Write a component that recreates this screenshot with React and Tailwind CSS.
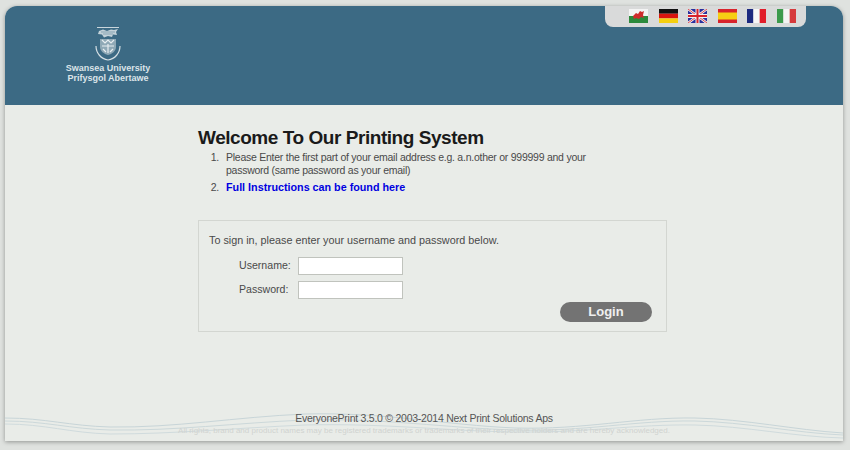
import React from 'react';

function Crest() {
  return (
    <svg width="30" height="36" viewBox="0 0 30 36" fill="none" className="block">
      {/* top bar and dragon */}
      <path d="M4 1.5 H26" stroke="#c9d6dc" strokeWidth="1" />
      <path d="M6 5 L10 3.5 L14 5 L18 3.5 L21 4 L25 3 L23 6 L24 9 L20 8.5 L19 11 L15 10 L11 11.5 L9 8.5 L5 8 Z" fill="#c3d2d9" />
      <path d="M8 6 H22 M10 8 H20" stroke="#6f93a5" strokeWidth="0.7" />
      {/* shield */}
      <path d="M7 13 H23 V21 C23 25 19 28 15 29 C11 28 7 25 7 21 Z" fill="#8fa9b6" />
      <path d="M9 14 L12 17 L15 14 L18 17 L21 14 M9 20 H21 M10 23 L13 26 M20 23 L17 26 M15 18 V27" stroke="#e6edf0" strokeWidth="1.2" />
      {/* scroll under the shield */}
      <path d="M3 20 C3 27 8 33 15 34 C22 33 27 27 27 20" stroke="#d3dee3" strokeWidth="1.2" />
    </svg>
  );
}

function Flag({ children }) {
  return (
    <svg width="19" height="14" viewBox="0 0 19 14" className="block">
      {children}
    </svg>
  );
}

function Flags() {
  return (
    <div className="absolute top-0 right-[37px] w-[201px] h-[21px] bg-[#d9dada] rounded-b-[8px] flex items-start justify-end gap-[10.6px] pt-[3px] pr-[10px]">
      <Flag>
        <rect width="19" height="7" fill="#f4f4f4" />
        <rect y="7" width="19" height="7" fill="#2c8a3c" />
        <path d="M4 7 L7 4 L9 5 L11 2 L13 3 L15 2 L14 6 L15 9 L12 8 L10 10 L7 9 L5 10 Z" fill="#cf2b2b" />
      </Flag>
      <Flag>
        <rect width="19" height="4.7" fill="#111" />
        <rect y="4.7" width="19" height="4.7" fill="#d8150f" />
        <rect y="9.4" width="19" height="4.6" fill="#f5cf10" />
      </Flag>
      <Flag>
        <rect width="19" height="14" fill="#2a2f9c" />
        <path d="M0 0 L19 14 M19 0 L0 14" stroke="#f2f2f2" strokeWidth="2.6" />
        <path d="M0 0 L19 14 M19 0 L0 14" stroke="#d8343c" strokeWidth="0.9" />
        <path d="M9.5 0 V14 M0 7 H19" stroke="#f2f2f2" strokeWidth="4" />
        <path d="M9.5 0 V14 M0 7 H19" stroke="#d8242c" strokeWidth="2" />
      </Flag>
      <Flag>
        <rect width="19" height="14" fill="#d9232b" />
        <rect y="3.5" width="19" height="7" fill="#f6cf14" />
      </Flag>
      <Flag>
        <rect width="6.4" height="14" fill="#1d2a80" />
        <rect x="6.4" width="6.3" height="14" fill="#f7f7f7" />
        <rect x="12.7" width="6.3" height="14" fill="#e11d2a" />
      </Flag>
      <Flag>
        <rect width="6.4" height="14" fill="#3c9a4c" />
        <rect x="6.4" width="6.3" height="14" fill="#f4f4f4" />
        <rect x="12.7" width="6.3" height="14" fill="#d63a3c" />
      </Flag>
    </div>
  );
}

function Waves() {
  return (
    <svg className="absolute left-0 bottom-0 pointer-events-none" width="838" height="30" viewBox="0 0 838 30" fill="none">
      <path d="M0 7 C40 7 65 15 105 16 C170 17 230 6 300 3 C380 1 440 14 510 17 C580 19 630 6 690 7 C740 8 790 19 838 22" stroke="#c8d5d8" strokeWidth="1" />
      <path d="M0 10 C40 10 65 18 105 19 C170 20 230 12 300 9 C380 7 440 17 510 19 C580 21 630 9 690 10 C740 11 790 22 838 24" stroke="#ccd8da" strokeWidth="1" />
      <path d="M0 13 C40 13 65 22 105 23 C170 23 230 17 300 14 C380 12 440 20 510 21 C580 22 630 13 690 14 C740 15 790 26 838 27" stroke="#d0dbdd" strokeWidth="1" />
    </svg>
  );
}

export default function App() {
  return (
    <div className="w-[850px] h-[450px] bg-[#dfe2df] pt-[6px] pl-[5px] overflow-hidden font-['Liberation_Sans',Arial,sans-serif]">
      <div className="relative w-[838px] h-[435px] bg-[#e9ece8] rounded-t-[12px] shadow-[0_1px_4px_rgba(0,0,0,0.35)] flex flex-col overflow-hidden">
        {/* Header */}
        <div className="h-[99px] shrink-0 bg-[#3c6a84] pl-[59px] pt-[20px]">
          <div className="flex flex-col items-center w-[88px]">
            <Crest />
            <div className="mt-[2px] text-[9px] leading-[9.5px] font-bold text-[#dbe4e9] text-center whitespace-nowrap">
              <div>Swansea University</div>
              <div>Prifysgol Abertawe</div>
            </div>
          </div>
        </div>
        <Flags />

        {/* Main */}
        <div className="flex-1 pl-[193px] pt-[21px] w-[662px]">
          <h1 className="text-[19px] leading-[24px] font-bold tracking-[-0.45px] text-[#1a1a1a]">Welcome To Our Printing System</h1>
          <ol className="mt-[1px] text-[10.5px] tracking-[-0.25px] leading-[13px] text-[#4a4a4a]">
            <li className="flex">
              <span className="w-[28px] pr-[7px] shrink-0 text-right">1.</span>
              <span className="w-[380px]">Please Enter the first part of your email address e.g. a.n.other or 999999 and your password (same password as your email)</span>
            </li>
            <li className="flex mt-[4px]">
              <span className="w-[28px] pr-[7px] shrink-0 text-right">2.</span>
              <a href="#" className="font-bold text-[10.75px] tracking-normal text-[#0000e0]">Full Instructions can be found here</a>
            </li>
          </ol>

          {/* Sign in box */}
          <div className="mt-[26px] w-[469px] h-[112px] border border-[#d3d6d1] pl-[10px] pt-[13px] flex flex-col">
            <p className="text-[10.8px] leading-[13px] text-[#4a4a4a]">To sign in, please enter your username and password below.</p>
            <div className="mt-[10px] flex items-center">
              <label className="w-[89px] pl-[30px] text-[10.6px] text-[#4a4a4a]">Username:</label>
              <input type="text" className="w-[105px] h-[18px] bg-white border border-[#c0c3bd] outline-none" />
            </div>
            <div className="mt-[6px] flex items-center">
              <label className="w-[89px] pl-[30px] text-[10.6px] text-[#4a4a4a]">Password:</label>
              <input type="password" className="w-[105px] h-[18px] bg-white border border-[#c0c3bd] outline-none" />
            </div>
            <div className="flex justify-end pr-[14px] mt-[3px]">
              <button className="w-[92px] h-[20px] rounded-full bg-[#737373] text-[13px] leading-[20px] font-bold text-[#efefef]">Login</button>
            </div>
          </div>
        </div>

        {/* Footer */}
        <Waves />
        <div className="relative h-[29px] shrink-0 text-center">
          <div className="text-[10.5px] tracking-[-0.25px] leading-[13px] text-[#555]">EveryonePrint 3.5.0 © 2003-2014 Next Print Solutions Aps</div>
          <div className="mt-[1px] text-[8px] leading-[10px] text-[#d0d3d0] whitespace-nowrap">All rights, brand and product names may be registered trademarks or trademarks of their respective holders and are hereby acknowledged.</div>
        </div>
      </div>
    </div>
  );
}
